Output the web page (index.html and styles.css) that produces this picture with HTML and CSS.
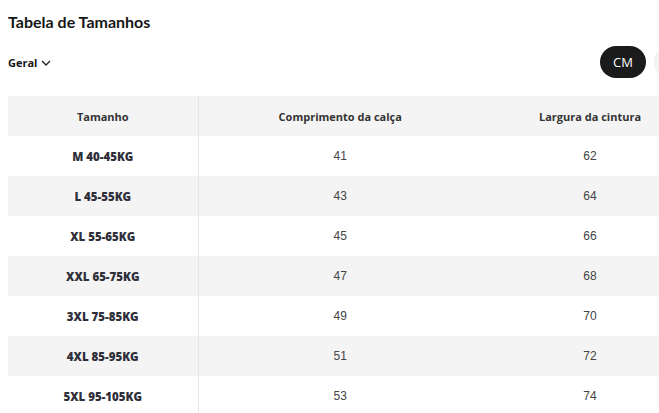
FILE: index.html
```html
<!DOCTYPE html>
<html lang="pt">
<head>
<meta charset="utf-8">
<link rel="stylesheet" href="styles.css">
</head>
<body>
<div class="page">
  <h1 class="title">Tabela de Tamanhos</h1>
  <div class="toolbar">
    <div class="filter">Geral
      <svg class="chev" width="10" height="6" viewBox="0 0 10 6"><path d="M1 1l4 4 4-4" fill="none" stroke="#222" stroke-width="1.3"/></svg>
    </div>
    <div class="units">
      <span class="pill active">CM</span>
      <span class="pill" aria-label="IN"></span>
    </div>
  </div>
  <div class="table-wrap">
    <table class="sizes">
      <colgroup><col class="c1"><col class="c2"><col class="c3"></colgroup>
      <thead>
        <tr><th>Tamanho</th><th>Comprimento da calça</th><th>Largura da cintura</th></tr>
      </thead>
      <tbody>
        <tr><th>M 40-45KG</th><td>41</td><td>62</td></tr>
        <tr><th>L 45-55KG</th><td>43</td><td>64</td></tr>
        <tr><th>XL 55-65KG</th><td>45</td><td>66</td></tr>
        <tr><th>XXL 65-75KG</th><td>47</td><td>68</td></tr>
        <tr><th>3XL 75-85KG</th><td>49</td><td>70</td></tr>
        <tr><th>4XL 85-95KG</th><td>51</td><td>72</td></tr>
        <tr><th>5XL 95-105KG</th><td>53</td><td>74</td></tr>
      </tbody>
    </table>
  </div>
</div>
</body>
</html>
```
FILE: styles.css
```css
html, body { margin: 0; padding: 0; background: #fff; }
body { font-family: "Open Sans", "Noto Sans", sans-serif; color: #222; overflow: hidden; }
.page { padding: 0 0 0 8px; }
.title { margin: 0; padding-top: 13px; font-family: Lato, sans-serif; font-size: 16px; font-weight: 700; line-height: 18px; color: #161616; }
.toolbar { display: flex; align-items: center; justify-content: space-between; margin-top: 14px; height: 34px; }
.filter { display: flex; align-items: center; gap: 4px; font-size: 11px; font-weight: 700; color: #161616; }
.chev { margin-top: 1px; }
.units { display: flex; gap: 8px; margin-right: -41px; }
.pill { display: flex; align-items: center; justify-content: center; width: 46px; height: 32px; border-radius: 16px; background: #f2f2f2; font-size: 13px; color: #222; }
.pill.active { background: #1b1b1b; color: #fff; }
.table-wrap { margin-top: 17px; overflow: hidden; }
.sizes { border-collapse: collapse; table-layout: fixed; width: 690px; }
.c1 { width: 190px; }
.c2 { width: 284px; }
.c3 { width: 216px; }
.sizes th, .sizes td { height: 40px; padding: 0; text-align: center; vertical-align: middle; }
.sizes thead th { font-size: 11px; font-weight: 700; color: #333; }
.sizes tbody th { font-size: 11.5px; font-weight: 800; color: #2f2f3a; }
.sizes td { font-family: "Liberation Sans", Arial, sans-serif; font-size: 12px; color: #444; }
.sizes tr > :first-child { border-right: 1px solid #e6e6e6; }
.sizes thead tr, .sizes tbody tr:nth-child(even) { background: #f4f4f4; }
```
